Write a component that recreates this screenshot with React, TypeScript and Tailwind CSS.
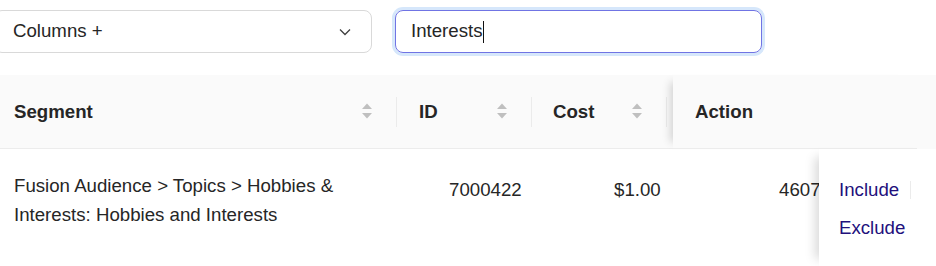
import React from "react";

function SortIcon() {
  return (
    <svg width="10" height="17" viewBox="0 0 10 17" className="flex-none">
      <polygon points="0,6 5,0.5 10,6" fill="#bfbfbf" />
      <polygon points="0,10 5,15.5 10,10" fill="#bfbfbf" />
    </svg>
  );
}

function Sep() {
  return <div className="w-px h-[30px] bg-[#ebebeb] flex-none" />;
}

export default function App() {
  return (
    <div className="w-[936px] h-[266px] overflow-hidden bg-white font-['Liberation_Sans',Arial,sans-serif] text-[18.67px] text-[#262626]">
      {/* top controls */}
      <div className="flex items-start pt-[10px] gap-[23px] -ml-[6px]">
        <div className="w-[378px] h-[43px] flex-none flex items-center justify-between border border-[#d9d9d9] rounded-[8px] pl-[18px] pr-[20px]">
          <span className="leading-none">Columns +</span>
          <svg width="12" height="8" viewBox="0 0 12 8" className="flex-none">
            <path d="M1 1.5 L6 6.5 L11 1.5" fill="none" stroke="#404040" strokeWidth="1.3" />
          </svg>
        </div>
        <div className="w-[367px] h-[43px] flex-none flex items-center border border-[#7074e4] rounded-[8px] pl-[15px] shadow-[0_0_0_3px_#d6e7fb]">
          <span className="leading-none text-[#262626]">Interests</span>
          <span className="w-px h-[22px] bg-[#111]" />
        </div>
      </div>

      {/* header */}
      <div className="mt-[22px] flex h-[74px] bg-[#fafafa] font-bold">
        <div className="w-[397px] flex-none flex items-center border-b border-[#ececec] pl-[14px]">
          <span className="flex-1">Segment</span>
          <SortIcon />
          <div className="w-[24px]" />
          <Sep />
        </div>
        <div className="w-[135px] flex-none flex items-center border-b border-[#ececec] pl-[22px]">
          <span className="flex-1">ID</span>
          <SortIcon />
          <div className="w-[24px]" />
          <Sep />
        </div>
        <div className="w-[135px] flex-none flex items-center border-b border-[#ececec] pl-[21px]">
          <span className="flex-1">Cost</span>
          <SortIcon />
          <div className="w-[24px]" />
          <Sep />
        </div>
        <div className="w-[6px] flex-none border-b border-[#ececec]" />
        <div className="relative z-10 w-[244px] flex-none flex items-center border-b border-[#ececec] pl-[22px] bg-[#fafafa] shadow-[-10px_0_8px_-7px_rgba(0,0,0,0.15)]">
          <span>Action</span>
        </div>
        <div className="flex-1 bg-[#fafafa]" />
      </div>

      {/* body row */}
      <div className="flex h-[118px] leading-[29px]">
        <div className="w-[428px] flex-none pl-[14px] pr-[40px] pt-[22px]">
          Fusion Audience &gt; Topics &gt; Hobbies &amp; Interests: Hobbies and Interests
        </div>
        <div className="w-[165px] flex-none pl-[21px] pt-[26px]">7000422</div>
        <div className="w-[165px] flex-none pl-[21px] pt-[26px]">$1.00</div>
        <div className="w-[61px] flex-none pl-[21px] pt-[26px] overflow-hidden whitespace-nowrap">46070001</div>
        <div className="relative z-10 flex-1 bg-white pl-[20px] pt-[26px] shadow-[-12px_0_10px_-8px_rgba(0,0,0,0.15)] text-[#22107c]">
          <div className="flex items-center">
            <span>Include</span>
            <div className="ml-[11px] w-px h-[18px] bg-[#ebebeb]" />
          </div>
          <div className="mt-[9px]">Exclude</div>
        </div>
      </div>
    </div>
  );
}
